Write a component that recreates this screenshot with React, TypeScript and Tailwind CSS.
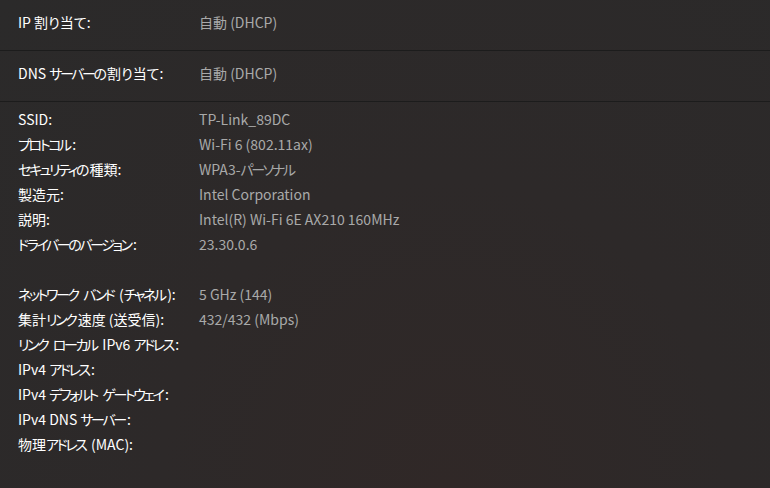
import React from "react";

const font = {
  fontFamily: '"Noto Sans CJK JP", "Noto Sans", sans-serif',
  fontFeatureSettings: '"palt"',
};

const T = ({ text }: { text: string }) => {
  const parts = text.split(/([\u3040-\u30ff]+)/).filter((p) => p.length > 0);
  return (
    <>
      {parts.map((p, i) =>
        /[\u3040-\u30ff]/.test(p) ? (
          <span key={i}>
            <span className="tracking-[-2.4px]">{p.slice(0, -1)}</span>
            <span>{p.slice(-1)}</span>
          </span>
        ) : (
          <span key={i}>{p}</span>
        )
      )}
    </>
  );
};

const Row = ({ label, value, h = "h-[25px]" }: { label: string; value?: string; h?: string }) => (
  <div className={`flex ${h} items-center whitespace-nowrap`}>
    <div className="w-[181px] shrink-0 text-white">
      <T text={label} />
    </div>
    <div className="text-[#a9a9a9]">{value ? <T text={value} /> : null}</div>
  </div>
);

export default function App() {
  const group1: [string, string?][] = [
    ["SSID:", "TP-Link_89DC"],
    ["プロトコル:", "Wi-Fi 6 (802.11ax)"],
    ["セキュリティの種類:", "WPA3-パーソナル"],
    ["製造元:", "Intel Corporation"],
    ["説明:", "Intel(R) Wi-Fi 6E AX210 160MHz"],
    ["ドライバーのバージョン:", "23.30.0.6"],
  ];
  const group2: [string, string?][] = [
    ["ネットワーク バンド (チャネル):", "5 GHz (144)"],
    ["集計リンク速度 (送受信):", "432/432 (Mbps)"],
    ["リンク ローカル IPv6 アドレス:"],
    ["IPv4 アドレス:"],
    ["IPv4 デフォルト ゲートウェイ:"],
    ["IPv4 DNS サーバー:"],
    ["物理アドレス (MAC):"],
  ];
  return (
    <div
      className="w-[770px] h-[488px] overflow-hidden bg-[radial-gradient(ellipse_at_58%_100%,#302827_0%,#2d2929_45%,#2b2a2a_100%)] text-[14px] leading-none"
      style={font}
    >
      <div className="pl-[18px] pb-[6px] border-b border-[#1c1c1c]">
        <Row label="IP 割り当て:" value="自動 (DHCP)" h="h-[44px]" />
      </div>
      <div className="pl-[18px] pb-[6px] border-b border-[#1c1c1c]">
        <Row label="DNS サーバーの割り当て:" value="自動 (DHCP)" h="h-[44px]" />
      </div>
      <div className="pl-[18px] pt-[4px]">
        {group1.map(([l, v]) => (
          <Row key={l} label={l} value={v} />
        ))}
        <div className="h-[25px]" />
        {group2.map(([l, v]) => (
          <Row key={l} label={l} value={v} />
        ))}
      </div>
    </div>
  );
}
